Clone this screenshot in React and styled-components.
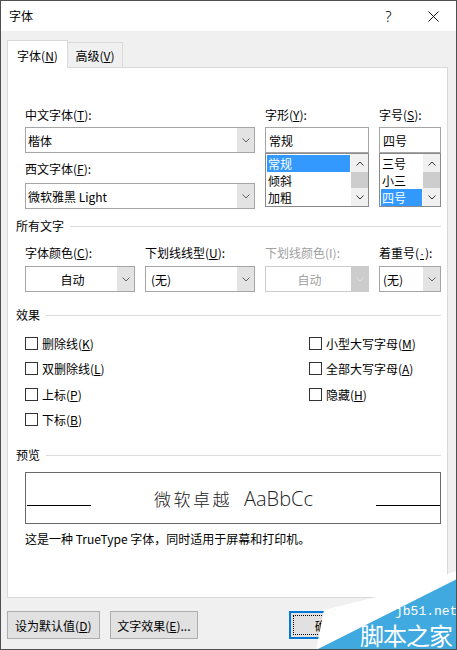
import React from "react";
import styled, { createGlobalStyle } from "styled-components";

const GlobalStyle = createGlobalStyle`
  html, body { margin: 0; padding: 0; background: #fff; }
  body {
    font-family: "Noto Sans CJK SC", "Noto Sans", sans-serif;
    font-size: 12px;
    color: #000;
  }
  u { text-decoration: underline; text-underline-offset: 1px; }
`;

const Window = styled.div`
  position: relative;
  width: 457px;
  height: 650px;
  box-sizing: border-box;
  border: 1px solid #505050;
  background: #f0f0f0;
  display: flex;
  flex-direction: column;
  overflow: hidden;
`;

const TitleBar = styled.div`
  height: 30px;
  background: #fff;
  display: flex;
  align-items: center;
  padding-left: 8px;
`;

const Title = styled.div`
  flex: 1;
  line-height: 16px;
`;

const TitleBtn = styled.div`
  width: 45px;
  height: 30px;
  display: flex;
  align-items: center;
  justify-content: center;
  font-family: "Noto Sans", sans-serif;
  font-size: 15px;
  font-weight: 300;
`;

const Body = styled.div`
  flex: 1;
  padding: 9px 8px 0 6px;
  display: flex;
  flex-direction: column;
`;

const TabRow = styled.div`
  display: flex;
  align-items: flex-end;
  height: 28px;
  margin-bottom: -1px;
  position: relative;
  z-index: 1;
`;

const Tab = styled.div`
  box-sizing: border-box;
  width: ${(p) => (p.$active ? 61 : 55)}px;
  height: ${(p) => (p.$active ? 28 : 25)}px;
  margin-bottom: ${(p) => (p.$active ? 0 : 1)}px;
  background: ${(p) => (p.$active ? "#fff" : "#f0f0f0")};
  border: 1px solid #d9d9d9;
  border-bottom: none;
  border-left: ${(p) => (p.$active ? "1px solid #d9d9d9" : "none")};
  display: flex;
  align-items: center;
  justify-content: center;
  padding-top: ${(p) => (p.$active ? 1 : 0)}px;
`;

const Panel = styled.div`
  width: 441px;
  height: 531px;
  box-sizing: border-box;
  background: #fff;
  border: 1px solid #d9d9d9;
  padding: 39px 6px 0 17px;
  display: flex;
  flex-direction: column;
`;

const FontGrid = styled.div`
  display: grid;
  grid-template-columns: 230px 104px 62px;
  column-gap: 10px;
`;

const Col = styled.div`
  display: flex;
  flex-direction: column;
`;

const Label = styled.div`
  line-height: 16px;
  height: 16px;
  white-space: nowrap;
  color: ${(p) => (p.$disabled ? "#a0a0a0" : "#000")};
  margin-bottom: ${(p) => p.$mb ?? 4}px;
  margin-top: ${(p) => p.$mt ?? 0}px;
`;

const Dot = styled.u`
  font-family: "Liberation Sans", sans-serif;
  padding: 0 1px;
`;

const ComboBox = styled.div`
  display: flex;
  height: 26px;
  box-sizing: border-box;
  border: 1px solid ${(p) => (p.$disabled ? "#cccccc" : "#a5a5a5")};
  background: #fff;
`;

const ComboText = styled.div`
  flex: 1;
  display: flex;
  align-items: center;
  justify-content: ${(p) => (p.$center ? "center" : "flex-start")};
  padding-left: ${(p) => p.$pl ?? 2}px;
  color: ${(p) => (p.$disabled ? "#a0a0a0" : "#000")};
  white-space: nowrap;
`;

const DropBtn = styled.div`
  width: 17px;
  background: ${(p) => (p.$disabled ? "#cccccc" : "#e3e3e3")};
  display: flex;
  align-items: center;
  justify-content: center;
`;

const TextInput = styled.div`
  height: 26px;
  box-sizing: border-box;
  border: 1px solid #a5a5a5;
  display: flex;
  align-items: center;
  padding-left: 3px;
`;

const ListBox = styled.div`
  height: 54px;
  box-sizing: border-box;
  border: 1px solid #8a8a8a;
  display: flex;
`;

const Items = styled.div`
  flex: 1;
  padding: 1px 1px 0 1px;
`;

const Item = styled.div`
  height: 17px;
  line-height: 17px;
  padding-left: 1px;
  background: ${(p) => (p.$selected ? "#3399ff" : "transparent")};
  color: ${(p) => (p.$selected ? "#fff" : "#000")};
`;

const ScrollBar = styled.div`
  width: 17px;
  background: #f0f0f0;
  display: flex;
  flex-direction: column;
  padding-top: 1px;
`;

const ScrollArrow = styled.div`
  height: 17px;
  display: flex;
  align-items: center;
  justify-content: center;
`;

const ScrollTrack = styled.div`
  flex: 1;
`;

const Thumb = styled.div`
  height: 16px;
  background: #cdcdcd;
`;

const SectionHeader = styled.div`
  display: flex;
  align-items: center;
  margin-left: -9px;
  height: 16px;
  line-height: 16px;
  margin-top: ${(p) => p.$mt}px;
  &::after {
    content: "";
    flex: 1;
    height: 1px;
    background: #dcdcdc;
    margin-left: 6px;
  }
`;

const AttrGrid = styled.div`
  display: grid;
  grid-template-columns: 110px 110px 104px 62px;
  column-gap: 10px;
  margin-top: 11px;
`;

const CheckGrid = styled.div`
  display: grid;
  grid-template-columns: 284px 1fr;
  grid-template-rows: repeat(4, 25.3px);
  grid-auto-flow: column;
  margin-top: 8px;
`;

const CheckRow = styled.label`
  display: flex;
  align-items: center;
  gap: 4px;
  white-space: nowrap;
`;

const Box = styled.span`
  width: 13px;
  height: 13px;
  box-sizing: border-box;
  border: 1px solid #333;
  background: #fff;
`;

const PreviewBox = styled.div`
  margin-top: 9px;
  height: 52px;
  box-sizing: border-box;
  border: 1px solid #6a6a6a;
  display: flex;
  align-items: center;
  justify-content: space-between;
  padding: 0 0 0 1px;
`;

const BaseLine = styled.span`
  width: 64px;
  height: 1px;
  background: #000;
  margin-top: 14px;
`;

const PreviewText = styled.div`
  display: flex;
  align-items: baseline;
  color: #222;
`;

const PreviewCjk = styled.span`
  font-size: 17px;
  font-weight: 300;
  letter-spacing: 2.5px;
  margin-right: 12px;
`;

const PreviewLatin = styled.span`
  font-family: "Open Sans", sans-serif;
  font-size: 20px;
  font-weight: 300;
`;

const Note = styled.div`
  margin-top: 7px;
  line-height: 16px;
`;

const ButtonRow = styled.div`
  display: flex;
  margin-top: 13px;
  gap: 10px;
`;

const Button = styled.div`
  box-sizing: border-box;
  width: ${(p) => p.$w}px;
  height: 28px;
  background: #e1e1e1;
  border: ${(p) => (p.$default ? "2px solid #0078d7" : "1px solid #adadad")};
  display: flex;
  align-items: center;
  justify-content: center;
  position: relative;
  margin-left: ${(p) => p.$ml ?? 0}px;
`;

const FocusRing = styled.span`
  position: absolute;
  inset: 2px;
  border: 1px dotted #000;
`;

const Watermark = styled.div`
  position: absolute;
  right: -1px;
  bottom: -1px;
  width: 161px;
  height: 93px;
  pointer-events: none;
`;

const WmSite = styled.span`
  position: absolute;
  left: 99px;
  top: 47px;
  font-family: "Liberation Mono", monospace;
  font-size: 13px;
  line-height: 16px;
  color: #fff;
`;

const WmName = styled.span`
  position: absolute;
  left: 64px;
  top: 63px;
  font-size: 24px;
  line-height: 30px;
  color: #fff;
  letter-spacing: -1px;
`;

const Chevron = ({ up, color = "#555" }) => (
  <svg width="8" height="5" viewBox="0 0 8 5">
    <polyline
      points={up ? "0.5,4.5 4,1 7.5,4.5" : "0.5,0.5 4,4 7.5,0.5"}
      fill="none"
      stroke={color}
      strokeWidth="1"
    />
  </svg>
);

const Combo = ({ text, center, pl, disabled }) => (
  <ComboBox $disabled={disabled}>
    <ComboText $center={center} $pl={pl} $disabled={disabled}>
      {text}
    </ComboText>
    <DropBtn $disabled={disabled}>
      <Chevron color={disabled ? "#e0e0e0" : "#606060"} />
    </DropBtn>
  </ComboBox>
);

const List = ({ items, selected }) => (
  <ListBox>
    <Items>
      {items.map((t, i) => (
        <Item key={t} $selected={i === selected}>
          {t}
        </Item>
      ))}
    </Items>
    <ScrollBar>
      <ScrollArrow>
        <Chevron up color="#333" />
      </ScrollArrow>
      <ScrollTrack>
        <Thumb />
      </ScrollTrack>
      <ScrollArrow>
        <Chevron color="#333" />
      </ScrollArrow>
    </ScrollBar>
  </ListBox>
);

const Check = ({ children }) => (
  <CheckRow>
    <Box />
    <span>{children}</span>
  </CheckRow>
);

export default function App() {
  return (
    <>
      <GlobalStyle />
      <Window>
        <TitleBar>
          <Title>字体</Title>
          <TitleBtn>?</TitleBtn>
          <TitleBtn>
            <svg width="11" height="11" viewBox="0 0 11 11">
              <path d="M0.5 0.5 L10.5 10.5 M10.5 0.5 L0.5 10.5" stroke="#111" strokeWidth="1" />
            </svg>
          </TitleBtn>
        </TitleBar>
        <Body>
          <TabRow>
            <Tab $active>
              字体(<u>N</u>)
            </Tab>
            <Tab>
              高级(<u>V</u>)
            </Tab>
          </TabRow>
          <Panel>
            <FontGrid>
              <Col>
                <Label>
                  中文字体(<u>T</u>):
                </Label>
                <Combo text="楷体" />
                <Label $mt={8} $mb={6}>
                  西文字体(<u>F</u>):
                </Label>
                <Combo text="微软雅黑 Light" />
              </Col>
              <Col>
                <Label>
                  字形(<u>Y</u>):
                </Label>
                <TextInput>常规</TextInput>
                <List items={["常规", "倾斜", "加粗"]} selected={0} />
              </Col>
              <Col>
                <Label>
                  字号(<u>S</u>):
                </Label>
                <TextInput>四号</TextInput>
                <List items={["三号", "小三", "四号"]} selected={2} />
              </Col>
            </FontGrid>

            <SectionHeader $mt={9}>所有文字</SectionHeader>
            <AttrGrid>
              <Col>
                <Label $mb={5}>
                  字体颜色(<u>C</u>):
                </Label>
                <Combo text="自动" center />
              </Col>
              <Col>
                <Label $mb={5}>
                  下划线线型(<u>U</u>):
                </Label>
                <Combo text="(无)" pl={5} />
              </Col>
              <Col>
                <Label $mb={5} $disabled>
                  下划线颜色(I):
                </Label>
                <Combo text="自动" center disabled />
              </Col>
              <Col>
                <Label $mb={5}>
                  着重号(<Dot>·</Dot>):
                </Label>
                <Combo text="(无)" pl={3} />
              </Col>
            </AttrGrid>

            <SectionHeader $mt={15}>效果</SectionHeader>
            <CheckGrid>
              <Check>
                删除线(<u>K</u>)
              </Check>
              <Check>
                双删除线(<u>L</u>)
              </Check>
              <Check>
                上标(<u>P</u>)
              </Check>
              <Check>
                下标(<u>B</u>)
              </Check>
              <Check>
                小型大写字母(<u>M</u>)
              </Check>
              <Check>
                全部大写字母(<u>A</u>)
              </Check>
              <Check>
                隐藏(<u>H</u>)
              </Check>
            </CheckGrid>

            <SectionHeader $mt={15}>预览</SectionHeader>
            <PreviewBox>
              <BaseLine />
              <PreviewText>
                <PreviewCjk>微软卓越</PreviewCjk>
                <PreviewLatin>AaBbCc</PreviewLatin>
              </PreviewText>
              <BaseLine />
            </PreviewBox>
            <Note>这是一种 TrueType 字体，同时适用于屏幕和打印机。</Note>
          </Panel>

          <ButtonRow>
            <Button $w={94}>
              设为默认值(<u>D</u>)
            </Button>
            <Button $w={90}>
              文字效果(<u>E</u>)...
            </Button>
            <Button $w={76} $ml={81} $default>
              <FocusRing />
              确定
            </Button>
            <Button $w={75}>取消</Button>
          </ButtonRow>
        </Body>

        <Watermark>
          <svg width="161" height="93" viewBox="0 0 161 93">
            <polygon points="20,93 28,53 80,40 161,14 161,93" fill="#ffffff" />
            <polygon points="161,22 161,93 20,93" fill="#40a9df" />
          </svg>
          <WmSite>jb51.net</WmSite>
          <WmName>脚本之家</WmName>
        </Watermark>
      </Window>
    </>
  );
}
